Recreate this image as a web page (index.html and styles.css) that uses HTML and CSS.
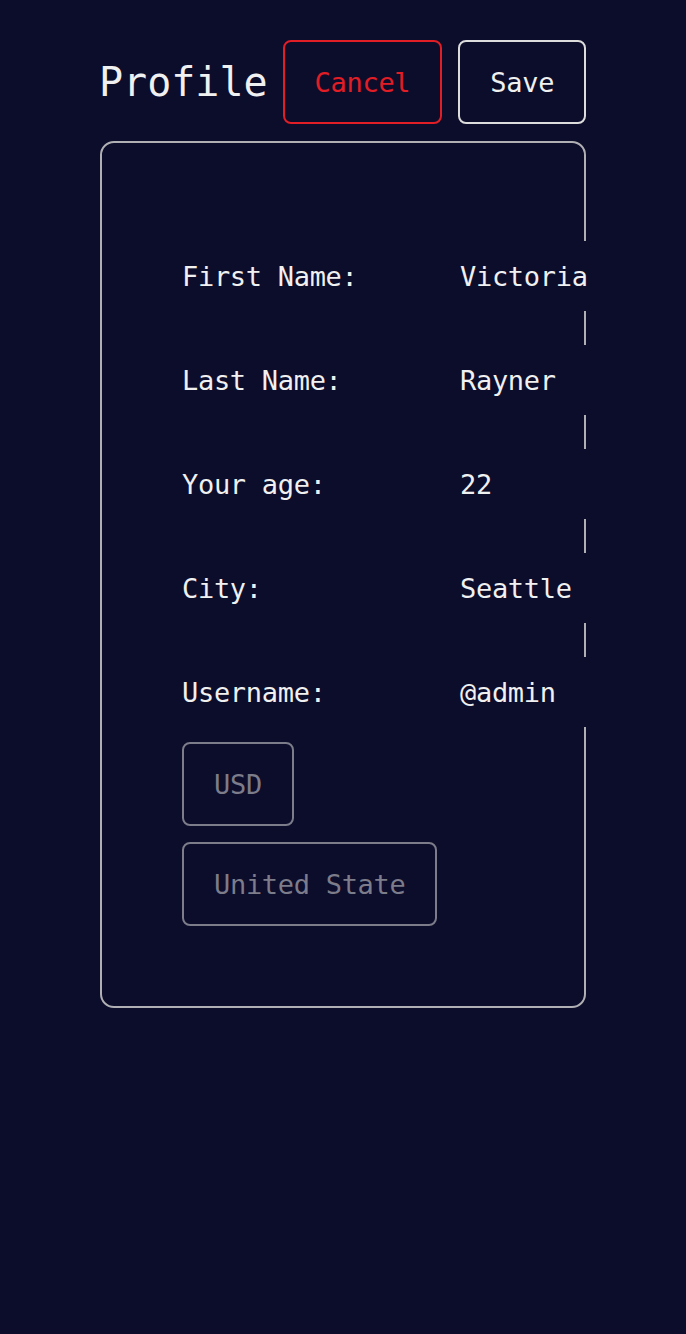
FILE: index.html
```html
<!DOCTYPE html>
<html lang="en">
<head>
<meta charset="utf-8">
<title>Profile</title>
<link rel="stylesheet" href="styles.css">
</head>
<body>
<main class="page">
  <header class="header">
    <h1 class="title">Profile</h1>
    <button class="btn btn-cancel" type="button">Cancel</button>
    <button class="btn btn-save" type="button">Save</button>
  </header>
  <section class="card">
    <div class="rows">
      <div class="row"><span class="label">First Name:</span><span class="value">Victoria</span></div>
      <div class="row"><span class="label">Last Name:</span><span class="value">Rayner</span></div>
      <div class="row"><span class="label">Your age:</span><span class="value">22</span></div>
      <div class="row"><span class="label">City:</span><span class="value">Seattle</span></div>
      <div class="row"><span class="label">Username:</span><span class="value">@admin</span></div>
    </div>
    <div class="chips">
      <button class="chip" type="button">USD</button>
      <button class="chip" type="button">United State</button>
    </div>
  </section>
</main>
</body>
</html>
```
FILE: styles.css
```css
html, body {
  margin: 0;
  padding: 0;
  background: #0c0c2b;
  min-height: 1334px;
}
body {
  font-family: "DejaVu Sans Mono", "Liberation Mono", monospace;
  color: #f0f0f0;
}
.page {
  width: 486px;
  margin-left: 100px;
  padding-top: 40px;
}
.header {
  display: flex;
  align-items: center;
  gap: 16px;
}
.title {
  margin: 0 -1px 0 -1px;
  font-size: 40px;
  font-weight: normal;
  letter-spacing: 0;
  line-height: 48px;
  color: #f0f0f0;
  flex: none;
}
.btn, .chip {
  box-sizing: border-box;
  display: inline-flex;
  align-items: center;
  justify-content: center;
  height: 84px;
  font-family: "DejaVu Sans Mono", "Liberation Mono", monospace;
  font-size: 27px;
  letter-spacing: -0.3px;
  line-height: 33px;
  padding: 0 30px;
  background: transparent;
  border: 2px solid;
  border-radius: 8px;
  cursor: pointer;
  flex: none;
}
.btn-cancel {
  color: #e11d25;
  border-color: #e11d25;
}
.btn-save {
  margin-left: auto;
  color: #f0f0f0;
  border-color: #dcdcdc;
}
.card {
  margin-top: 17px;
  border: 2px solid #b0b0b4;
  border-radius: 14px;
  padding: 98px 0 80px 80px;
}
.rows {
  display: flex;
  flex-direction: column;
  gap: 34px;
}
.row {
  display: flex;
  align-items: center;
  width: 420px;
  height: 70px;
  background: #0c0c2b;
  font-size: 27px;
  letter-spacing: -0.3px;
}
.label {
  width: 278px;
  flex: none;
  white-space: pre;
}
.value {
  white-space: nowrap;
}
.chips {
  margin-top: 15px;
  display: flex;
  flex-direction: column;
  align-items: flex-start;
  gap: 16px;
}
.chip {
  color: #7c7c8a;
  border-color: #7c7c8a;
}
```
